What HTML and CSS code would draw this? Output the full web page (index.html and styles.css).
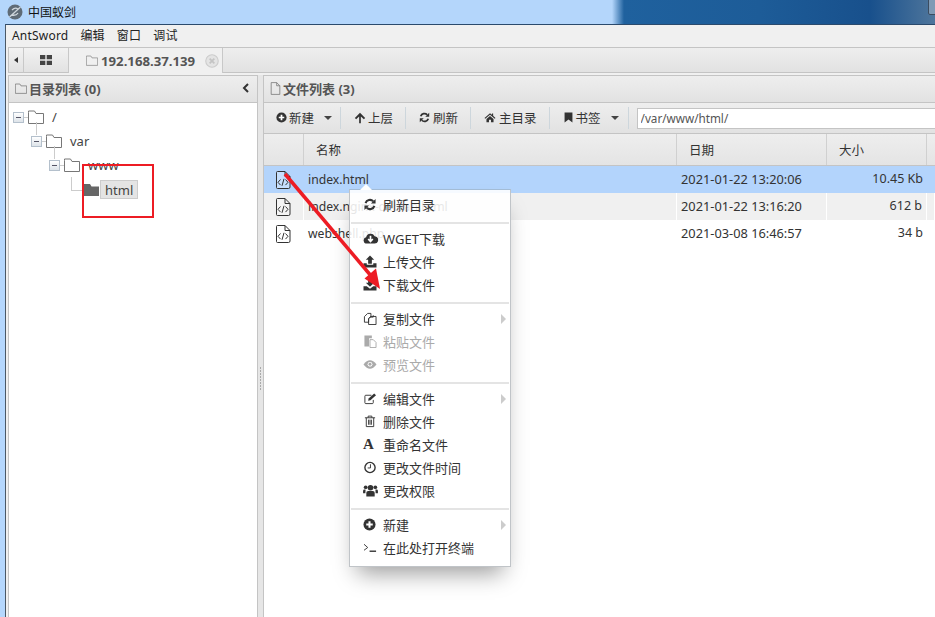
FILE: index.html
```html
<!DOCTYPE html>
<html lang="zh-CN">
<head>
    <meta charset="UTF-8">
    <title>中国蚁剑</title>
    <link rel="stylesheet" href="styles.css">
</head>
<body>
    <svg class="defs" width="0" height="0">
        <symbol id="folder" viewBox="0 0 16 14"><path d="M.5 2.500V1h6l1.500 2.500h7.500V13.500H.5z" fill="none" stroke="currentColor"/></symbol>
        <symbol id="file" viewBox="0 0 14 16"><path d="M1.500.5h7l4 4v11h-11zM8.500.5v4h4" fill="none" stroke="currentColor"/></symbol>
        <symbol id="code" viewBox="0 0 16 18"><path d="M1.500 1.500q0-1 1-1h7.500l5 5v10.500q0 1.500-1.500 1.500h-11q-1 0-1-1zM10 .5v5h5" fill="#fff" fill-opacity=".25" stroke="#333"/><path d="M5.500 8.500l-2.500 2.800 2.500 2.800M10.500 8.500l2.500 2.800-2.500 2.800M9 7.800l-2 7" fill="none" stroke="#333"/></symbol>
        <symbol id="plus" viewBox="0 0 14 14"><circle cx="7" cy="7" r="6.500" fill="currentColor"/><path d="M3.500 7h7M7 3.500v7" stroke="#fff" stroke-width="2.200"/></symbol>
        <symbol id="up" viewBox="0 0 14 14"><path d="M7 1L1 7l1.500 1.500L6 5.200V13h2V5.200l3.500 3.300L13 7z" fill="currentColor"/></symbol>
        <symbol id="refresh" viewBox="0 0 14 14"><path d="M2.200 5.500A5 5 0 0 1 10.500 3.500M11.800 8.500A5 5 0 0 1 3.500 10.500" fill="none" stroke="currentColor" stroke-width="2.200"/><path d="M13 1v5H8zM1 13V8h5z" fill="currentColor"/></symbol>
        <symbol id="home" viewBox="0 0 14 14"><path d="M7 1.500L0 7.500l1 1 6-5 6 5 1-1-3-2.600V2H9.500v1.600zM2.500 9L7 5.200 11.500 9v4H8.300V9.800H5.700V13H2.500z" fill="currentColor"/></symbol>
        <symbol id="bookmark" viewBox="0 0 14 14"><path d="M2 .5h10v13L7 9.500 2 13.500z" fill="currentColor"/></symbol>
        <symbol id="cloud" viewBox="0 0 16 14"><path d="M4 12.500a3.500 3.500 0 0 1-.7-6.900A5 5 0 0 1 12.500 4.500 4 4 0 0 1 12 12.500z" fill="currentColor"/><path d="M8 4v6M5.500 7.500L8 10.300l2.500-2.800" fill="none" stroke="#fff" stroke-width="1.800"/></symbol>
        <symbol id="upload" viewBox="0 0 14 14"><path d="M7 .5L2.500 5H5v4.500h4V5h2.500zM0 9h3.500v1.500h7V9H14v4.500H0z" fill="currentColor"/></symbol>
        <symbol id="download" viewBox="0 0 14 14"><path d="M5 .5h4V5h2.500L7 9.500 2.500 5H5zM0 9h3.500L7 11.500 10.500 9H14v4.500H0z" fill="currentColor"/></symbol>
        <symbol id="copy" viewBox="0 0 14 14"><path d="M1 5l3.500-3.500H8v3L5.500 7v4H1zM7 5.500h3.500v-2M5.500 7.500L8 4.800h5.500v8.700h-8z" fill="none" stroke="currentColor"/></symbol>
        <symbol id="paste" viewBox="0 0 14 14"><path d="M1 .5h8v3H6v9H1z" fill="currentColor"/><path d="M7 5h3.500L13.500 8v5.500H7z" fill="#fff" stroke="currentColor"/></symbol>
        <symbol id="eye" viewBox="0 0 14 14"><path d="M0 7q3.500-4.500 7-4.500T14 7q-3.500 4.500-7 4.500T0 7z" fill="currentColor"/><circle cx="7" cy="6.800" r="2.600" fill="#fff"/><circle cx="7" cy="6.800" r="1.600" fill="currentColor"/></symbol>
        <symbol id="edit" viewBox="0 0 14 14"><path d="M10.500 8.500v3a1 1 0 0 1-1 1h-7a1 1 0 0 1-1-1v-7a1 1 0 0 1 1-1h6" fill="none" stroke="currentColor"/><path d="M5 9.500l.5-2.500 6-5.500 2 2-6 5.500z" fill="currentColor"/></symbol>
        <symbol id="trash" viewBox="0 0 14 14"><path d="M1.500 3h11M5 3V1.200h4V3M3 3v9.500h8V3M5.500 5v5.500M7 5v5.500M8.500 5v5.500" fill="none" stroke="currentColor"/></symbol>
        <symbol id="clock" viewBox="0 0 14 14"><circle cx="7" cy="7" r="5.500" fill="none" stroke="currentColor" stroke-width="1.500"/><path d="M7.500 3.500v4H4.500" fill="none" stroke="currentColor"/></symbol>
        <symbol id="users" viewBox="0 0 16 14"><circle cx="8" cy="4" r="3" fill="currentColor"/><circle cx="2.800" cy="3.500" r="2" fill="currentColor"/><circle cx="13.200" cy="3.500" r="2" fill="currentColor"/><path d="M3.500 13.500v-4q0-2 2-2h5q2 0 2 2v4zM0 10V7.500q0-1.500 1.500-1.500h1.200L2.500 10zM16 10V7.500Q16 6 14.500 6h-1.200l.2 4z" fill="currentColor"/></symbol>
        <symbol id="terminal" viewBox="0 0 16 14"><path d="M1 3.500L5 7 1 10" fill="none" stroke="currentColor"/><path d="M7 11h7" stroke="currentColor" stroke-width="1.500"/></symbol>
    </svg>

    <div class="titlebar">
        <svg class="logo" viewBox="0 0 16 16"><circle cx="8" cy="8" r="7.500" fill="#5f6b76"/><path d="M2.500 13L13.500 3M5 6q3-3 6-1M5 11q4 1 6-2" fill="none" stroke="#cfd6dc" stroke-width="1.300"/></svg>
        <span>中国蚁剑</span>
        <div class="corner-btn"></div>
    </div>

    <div class="window">
        <div class="menubar">
            <span>AntSword</span><span>编辑</span><span>窗口</span><span>调试</span>
        </div>
        <div class="tabbar">
            <div class="tab-prev"><i></i></div>
            <div class="tab tab-grid">
                <svg width="12" height="10" viewBox="0 0 12 10"><path d="M0 0h5.300v4.300H0zM6.700 0H12v4.300H6.700zM0 5.700h5.300V10H0zM6.700 5.700H12V10H6.700z" fill="#444"/></svg>
            </div>
            <div class="tab tab-active">
                <svg class="tab-folder" width="12" height="11"><use href="#folder"/></svg>
                <b>192.168.37.139</b>
                <svg class="tab-close" width="14" height="14" viewBox="0 0 13 13"><circle cx="6.500" cy="6.500" r="5.800" fill="#e4e4e4" stroke="#ccc"/><path d="M4.300 4.300l4.400 4.400M8.700 4.300l-4.400 4.400" stroke="#c4c4c4" stroke-width="1.600"/></svg>
            </div>
            <div class="tab-rest"></div>
        </div>
        <div class="panes">
            <section class="pane-left">
                <div class="pane-head">
                    <svg class="head-icon" width="12" height="11"><use href="#folder"/></svg>
                    <b>目录列表 (0)</b>
                    <svg class="collapse" width="8" height="10" viewBox="0 0 8 10"><path d="M6 1L2 5l4 4" fill="none" stroke="#333" stroke-width="2"/></svg>
                </div>
                <div class="tree">
                    <div class="node d0"><i class="exp"></i><svg class="node-folder" width="16" height="14"><use href="#folder"/></svg><span>/</span></div>
                    <div class="node d1"><i class="exp"></i><svg class="node-folder" width="16" height="14"><use href="#folder"/></svg><span>var</span></div>
                    <div class="node d2"><i class="exp"></i><svg class="node-folder" width="16" height="14"><use href="#folder"/></svg><span>www</span></div>
                    <div class="node d3">
                        <svg class="node-solid" width="15" height="13" viewBox="0 0 15 13"><path d="M0 1h6l1.500 2.500H15V13H0z" fill="#666"/></svg>
                        <span class="node-sel">html</span>
                    </div>
                </div>
            </section>
            <div class="sash"><i></i></div>
            <section class="pane-right">
                <div class="pane-head">
                    <svg class="head-icon" width="11" height="13"><use href="#file"/></svg>
                    <b>文件列表 (3)</b>
                </div>
                <div class="toolbar">
                    <button class="tool t-new"><svg width="11" height="11"><use href="#plus"/></svg>新建<i class="caret"></i></button>
                    <button class="tool t-up"><svg width="12" height="12"><use href="#up"/></svg>上层</button>
                    <button class="tool"><svg width="11" height="11"><use href="#refresh"/></svg>刷新</button>
                    <button class="tool"><svg width="12" height="11"><use href="#home"/></svg>主目录</button>
                    <button class="tool t-mark"><svg width="11" height="11"><use href="#bookmark"/></svg>书签<i class="caret"></i></button>
                    <input class="path" type="text" value="/var/www/html/">
                </div>
                <div class="grid">
                    <div class="row head"><div class="c-icon"></div><div class="c-name">名称</div><div class="c-date">日期</div><div class="c-size">大小</div><div class="c-end"></div></div>
                    <div class="row selected"><div class="c-icon"><svg width="16" height="18"><use href="#code"/></svg></div><div class="c-name">index.html</div><div class="c-date">2021-01-22 13:20:06</div><div class="c-size">10.45 Kb</div><div class="c-end"></div></div>
                    <div class="row odd"><div class="c-icon"><svg width="16" height="18"><use href="#code"/></svg></div><div class="c-name">index.nginx-debian.html</div><div class="c-date">2021-01-22 13:16:20</div><div class="c-size">612 b</div><div class="c-end"></div></div>
                    <div class="row"><div class="c-icon"><svg width="16" height="18"><use href="#code"/></svg></div><div class="c-name">webshell.php</div><div class="c-date">2021-03-08 16:46:57</div><div class="c-size">34 b</div><div class="c-end"></div></div>
                </div>
            </section>
        </div>
    </div>

    <div class="context">
        <div class="item"><svg width="14" height="13"><use href="#refresh"/></svg>刷新目录</div>
        <hr>
        <div class="item"><svg width="15" height="13"><use href="#cloud"/></svg>WGET下载</div>
        <div class="item"><svg width="14" height="13"><use href="#upload"/></svg>上传文件</div>
        <div class="item"><svg width="14" height="13"><use href="#download"/></svg>下载文件</div>
        <hr>
        <div class="item more"><svg width="14" height="13"><use href="#copy"/></svg>复制文件</div>
        <div class="item off"><svg width="14" height="13"><use href="#paste"/></svg>粘贴文件</div>
        <div class="item off"><svg width="14" height="13"><use href="#eye"/></svg>预览文件</div>
        <hr>
        <div class="item more"><svg width="14" height="13"><use href="#edit"/></svg>编辑文件</div>
        <div class="item"><svg width="14" height="13"><use href="#trash"/></svg>删除文件</div>
        <div class="item"><em class="letter">A</em>重命名文件</div>
        <div class="item"><svg width="14" height="13"><use href="#clock"/></svg>更改文件时间</div>
        <div class="item"><svg width="15" height="13"><use href="#users"/></svg>更改权限</div>
        <hr>
        <div class="item more"><svg width="13" height="13"><use href="#plus"/></svg>新建</div>
        <div class="item"><svg width="15" height="13"><use href="#terminal"/></svg>在此处打开终端</div>
    </div>

    <div class="mark-box"></div>
    <svg class="mark-arrow" width="935" height="617" viewBox="0 0 935 617">
        <path d="M285 174L372 277" stroke="#ed1c24" stroke-width="3.500" fill="none"/>
        <path d="M380 289L364.500 278.500 376 268.500z" fill="#ed1c24"/>
    </svg>
</body>
</html>
```

FILE: styles.css
```css
* {
    box-sizing: border-box;
}

html, body {
    height: 100%;
}

body {
    margin: 0;
    width: 935px;
    height: 617px;
    overflow: hidden;
    position: relative;
    background: #b5d7fd;
    font-family: "Noto Sans", "Noto Sans CJK SC", sans-serif;
    font-size: 12px;
    color: #333;
    display: flex;
    flex-direction: column;
}

svg {
    flex: none;
}

.defs {
    position: absolute;
}

/* title bar */
.titlebar {
    height: 24px;
    flex: none;
    display: flex;
    align-items: center;
    padding-left: 7px;
    gap: 5px;
    font-size: 12px;
    color: #111;
    position: relative;
    background: linear-gradient(90deg, #b4d6fb 0, #b4d6fb 612px, #1f619e 624px, #1d5c98 760px, #18508c 870px, #4f769c 935px);
}

.logo {
    width: 16px;
    height: 16px;
}

.corner-btn {
    position: absolute;
    top: -2px;
    right: -6px;
    width: 13px;
    height: 17px;
    border: 1px solid #3b4c60;
    border-radius: 2px;
    background: #7f9ab5;
}

/* window */
.window {
    flex: 1;
    min-height: 0;
    margin-left: 5px;
    border-top: 1px solid #2b4a6c;
    border-left: 1px solid #4a5866;
    background: #f0f0f0;
    display: flex;
    flex-direction: column;
}

.menubar {
    height: 22px;
    flex: none;
    display: flex;
    align-items: center;
    gap: 12px;
    padding: 0 6px 2px;
    font-size: 12px;
    letter-spacing: .2px;
    color: #222;
}

.tabbar {
    height: 26px;
    flex: none;
    margin-left: 2px;
    display: flex;
    border-top: 1px solid #c4c4c4;
    border-left: 1px solid #c4c4c4;
}

.tab-prev {
    width: 15px;
    display: flex;
    align-items: center;
    justify-content: center;
    border-right: 1px solid #c8c8c8;
    border-bottom: 1px solid #c4c4c4;
    background: linear-gradient(#f2f2f2, #e2e2e2);
}

.tab-prev i {
    border: 3px solid transparent;
    border-right: 4px solid #333;
    border-left: 0;
}

.tab {
    display: flex;
    align-items: center;
    border-right: 1px solid #c8c8c8;
}

.tab-grid {
    width: 45px;
    justify-content: center;
    border-bottom: 1px solid #c4c4c4;
    background: linear-gradient(#f2f2f2, #e2e2e2);
}

.tab-active {
    width: 154px;
    padding-left: 17px;
    background: #f0f0f0;
    color: #555;
    font-size: 13.200px;
}

.tab-folder {
    color: #8a8a8a;
    margin-right: 3px;
}

.tab-close {
    margin-left: 10px;
}

.tab-rest {
    flex: 1;
    border-bottom: 1px solid #c4c4c4;
    background: linear-gradient(#eeeeee, #e2e2e2);
}

.panes {
    flex: 1;
    min-height: 0;
    margin: 2px 0 0 2px;
    display: flex;
    border-top: 1px solid #c4c4c4;
}

.pane-left {
    width: 250px;
    flex: none;
    background: #fff;
    border-left: 1px solid #c4c4c4;
    border-right: 1px solid #c4c4c4;
    margin-top: -1px;
}

.pane-right {
    flex: 1;
    min-width: 0;
    background: #fff;
    border-left: 1px solid #c4c4c4;
    margin-top: -1px;
}

.sash {
    width: 5px;
    flex: none;
    margin-top: -1px;
    background: #e6e6e6;
    display: flex;
    align-items: flex-end;
    justify-content: center;
    padding-bottom: 226px;
}

.sash i {
    width: 1px;
    height: 24px;
    background: repeating-linear-gradient(#aaa 0, #aaa 2px, transparent 2px, transparent 3px);
}

.pane-head {
    height: 28px;
    display: flex;
    align-items: center;
    gap: 2px;
    padding: 0 0 2px 6px;
    border-top: 1px solid #c4c4c4;
    border-bottom: 1px solid #c4c4c4;
    background: linear-gradient(#eeeeee, #e2e2e2);
    font-size: 13px;
    color: #555;
}

.head-icon {
    color: #777;
}

.collapse {
    margin-left: auto;
    margin-right: 7px;
}

/* tree */
.tree {
    padding-top: 2px;
    font-size: 13px;
    color: #444;
}

.node {
    height: 24px;
    display: flex;
    align-items: center;
    position: relative;
}

.node-folder {
    color: #777;
    margin-right: 8px;
}

.d0 { margin-left: 4px; }
.d1 { margin-left: 22px; }
.d2 { margin-left: 40px; }
.d3 { margin-left: 75px; }

.exp {
    width: 11px;
    height: 11px;
    margin-right: 4px;
    border: 1px solid #b4c0cc;
    background: linear-gradient(#fff, #dde3e9);
    position: relative;
}

.exp::before {
    content: "";
    position: absolute;
    left: 2px;
    top: 4px;
    width: 5px;
    height: 1px;
    background: #556;
}

.exp::after {
    content: "";
    position: absolute;
    right: -5px;
    top: 4px;
    width: 4px;
    height: 1px;
    background: #ccc;
}

.d1::before, .d2::before {
    content: "";
    position: absolute;
    left: 5px;
    top: -7px;
    width: 1px;
    height: 13px;
    background: #ccc;
}

.d3::before {
    content: "";
    position: absolute;
    left: -13px;
    top: 0;
    width: 11px;
    height: 13px;
    border-left: 1px solid #ccc;
    border-bottom: 1px solid #ccc;
}

.node-solid {
    margin-right: 1px;
}

.node-sel {
    height: 19px;
    padding: 0 4px;
    margin-top: 1px;
    display: flex;
    align-items: center;
    background: #e4e4e4;
    border: 1px solid #ccc;
}

/* toolbar */
.toolbar {
    height: 31px;
    display: flex;
    align-items: center;
    border-bottom: 1px solid #c4c4c4;
    background: linear-gradient(#eeeeee, #e2e2e2);
}

.tool {
    height: 22px;
    padding: 0 12px 1px 13px;
    display: flex;
    align-items: center;
    gap: 3px;
    white-space: nowrap;
    border: 0;
    border-right: 1px solid #cdd6dc;
    background: none;
    font: inherit;
    font-size: 12.500px;
    color: #333;
}

.t-new {
    padding: 0 8px 1px 12px;
    gap: 2px;
}

.t-up {
    gap: 2px;
}

.t-mark {
    padding-right: 9px;
    gap: 2px;
}

.caret {
    margin-left: 8px;
    border: 4px solid transparent;
    border-top: 4px solid #444;
    border-bottom: 0;
}

.path {
    width: 320px;
    height: 21px;
    margin-left: 8px;
    flex: none;
    padding: 0 3px;
    border: 1px solid #c4c4c4;
    border-right: 0;
    background: #fff;
    font: inherit;
    font-size: 11.700px;
    color: #555;
}

/* file grid */
.row {
    height: 27px;
    display: flex;
    align-items: center;
    font-size: 12.500px;
    color: #333;
}

.row > div {
    height: 100%;
    display: flex;
    align-items: center;
}

.c-icon {
    width: 40px;
    flex: none;
    justify-content: center;
    padding-right: 2px;
}

.c-name {
    width: 373px;
    flex: none;
    padding-left: 4px;
    font-size: 12.200px;
}

.c-date {
    width: 150px;
    flex: none;
    padding: 0 0 2px 4px;
    font-size: 12.800px;
}

.c-size {
    width: 100px;
    flex: none;
    justify-content: flex-end;
    padding: 0 4px 2px 0;
}

.c-end {
    flex: 1;
}

.head {
    height: 32px;
    background: linear-gradient(#eeeeee, #e4e4e4);
    border-bottom: 1px solid #c4c4c4;
}

.head > div {
    border-right: 1px solid #d0d0d0;
    padding: 0 0 0 12px;
    justify-content: flex-start;
    font-size: 12.500px;
}

.head .c-end {
    border-right: 0;
}

.selected {
    background: #b3d4fc;
}

.odd {
    background: #f0f0f0;
}

.odd > div {
    border-right: 1px solid #fff;
}

/* context menu */
.context {
    position: absolute;
    left: 349px;
    top: 189px;
    width: 162px;
    height: 378px;
    padding-top: 4px;
    border: 1px solid #c0c4c8;
    border-top-color: #a3bcd6;
    background: rgba(255, 255, 255, .88);
    box-shadow: 0 14px 22px -8px rgba(0, 0, 0, .4);
    font-size: 13px;
    color: #333;
}

.context::before {
    content: "";
    position: absolute;
    left: 10px;
    top: -6px;
    border: 6px solid transparent;
    border-top: 0;
    border-bottom: 6px solid #fff;
}

.context hr {
    height: 2px;
    margin: 5px 1px 4px;
    border: 0;
    background: #e4e4e4;
}

.item {
    height: 23px;
    display: flex;
    align-items: center;
    padding: 0 0 2px 33px;
    position: relative;
}

.item svg, .letter {
    position: absolute;
    left: 13px;
    top: 4px;
}

.letter {
    font: bold 15px/13px "Liberation Serif", serif;
    color: #333;
}

.off {
    color: #aaa;
}

.more::after {
    content: "";
    position: absolute;
    right: 4px;
    top: 6px;
    border: 5px solid transparent;
    border-left: 5px solid #ccc;
    border-right: 0;
}

/* red annotations */
.mark-box {
    position: absolute;
    left: 82px;
    top: 164px;
    width: 72px;
    height: 54px;
    border: 2px solid #ed1c24;
}

.mark-arrow {
    position: absolute;
    left: 0;
    top: 0;
}
```
